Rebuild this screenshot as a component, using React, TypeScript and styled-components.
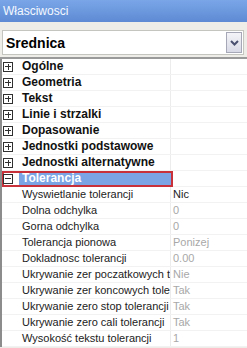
import React from 'react';
import styled, { createGlobalStyle } from 'styled-components';

const GlobalStyle = createGlobalStyle`
  html, body {
    margin: 0;
    padding: 0;
    background: #eeede8;
  }
  * {
    box-sizing: border-box;
  }
`;

const Panel = styled.div`
  width: 247px;
  height: 348px;
  overflow: hidden;
  background: #eeede8;
  font-family: 'Liberation Sans', Arial, sans-serif;
`;

const TitleBar = styled.div`
  height: 22px;
  padding: 4px 0 0 3px;
  background: linear-gradient(#7aa6e8, #5d8ad3);
  color: #f4f8ff;
  font-size: 12px;
`;

const ComboArea = styled.div`
  padding: 8px 3px 2px 2px;
  border-bottom: 2px solid #9a9a9a;
`;

const Combo = styled.div`
  height: 25px;
  display: flex;
  align-items: center;
  justify-content: space-between;
  padding: 0 1px 0 3px;
  background: #fff;
  border: 1px solid #c5c5c0;
  font-weight: bold;
  font-size: 14px;
  color: #000;
`;

const DropButton = styled.div`
  width: 16px;
  height: 21px;
  display: flex;
  align-items: center;
  justify-content: center;
  border: 1px solid #a6a8b8;
  background: linear-gradient(#f4f4f8, #d8dae6);
`;

const Grid = styled.div`
  border-left: 2px solid #8c8c8c;
  background: #fff;
`;

const Row = styled.div`
  display: grid;
  grid-template-columns: 17px 152px 1fr;
  height: 16px;
  border-bottom: 1px solid #f2f2f2;
  font-size: 11px;
  line-height: 15px;
`;

const Gutter = styled.div`
  display: flex;
  align-items: center;
  padding-left: 1px;
`;

const Box = styled.div<{ $open?: boolean }>`
  width: 10px;
  height: 10px;
  border: 1px solid #303030;
  position: relative;
  &::before {
    content: '';
    position: absolute;
    left: 1px;
    right: 1px;
    top: 3.5px;
    height: 1px;
    background: #303030;
  }
  &::after {
    content: '';
    position: absolute;
    top: 1px;
    bottom: 1px;
    left: 3.5px;
    width: 1px;
    background: #303030;
    display: ${({ $open }) => ($open ? 'none' : 'block')};
  }
`;

const CatLabel = styled.div<{ $selected?: boolean }>`
  padding-left: 3px;
  font-weight: bold;
  font-size: 12px;
  color: ${({ $selected }) => ($selected ? '#fff' : '#111')};
  background: ${({ $selected }) => ($selected ? '#7aa4e4' : 'transparent')};
  border-right: 1px solid #ececec;
  white-space: nowrap;
`;

const SelectedRow = styled(Row)`
  outline: 2px solid #c8303a;
  outline-offset: -2px;
  width: 171px;
  grid-template-columns: 17px 154px;
`;

const SelectedWrap = styled.div`
  display: flex;
  background: #fff;
`;

const PropLabel = styled.div`
  padding-left: 3px;
  color: #222;
  white-space: nowrap;
  overflow: hidden;
  border-right: 1px solid #ececec;
`;

const PropValue = styled.div<{ $dim?: boolean }>`
  padding-left: 2px;
  color: ${({ $dim }) => ($dim ? '#a8a8a8' : '#222')};
  white-space: nowrap;
`;

const Filler = styled.div`
  flex: 1;
  border-bottom: 1px solid #f2f2f2;
`;

const categories = [
  'Ogólne',
  'Geometria',
  'Tekst',
  'Linie i strzalki',
  'Dopasowanie',
  'Jednostki podstawowe',
  'Jednostki alternatywne',
];

const props: [string, string, boolean][] = [
  ['Wyswietlanie tolerancji', 'Nic', false],
  ['Dolna odchylka', '0', true],
  ['Gorna odchylka', '0', true],
  ['Tolerancja pionowa', 'Ponizej', true],
  ['Dokladnosc tolerancji', '0.00', true],
  ['Ukrywanie zer poczatkowych tolerancji', 'Nie', true],
  ['Ukrywanie zer koncowych tolerancji', 'Tak', true],
  ['Ukrywanie zero stop tolerancji', 'Tak', true],
  ['Ukrywanie zero cali tolerancji', 'Tak', true],
  ['Wysokość tekstu tolerancji', '1', true],
];

export default function App() {
  return (
    <Panel>
      <GlobalStyle />
      <TitleBar>Własciwosci</TitleBar>
      <ComboArea>
        <Combo>
          Srednica
          <DropButton>
            <svg width="9" height="6" viewBox="0 0 9 6">
              <path d="M1 1 L4.5 4.5 L8 1" stroke="#4a5070" strokeWidth="2" fill="none" />
            </svg>
          </DropButton>
        </Combo>
      </ComboArea>
      <Grid>
        {categories.map((c) => (
          <Row key={c}>
            <Gutter>
              <Box />
            </Gutter>
            <CatLabel>{c}</CatLabel>
            <div />
          </Row>
        ))}
        <SelectedWrap>
          <SelectedRow>
            <Gutter>
              <Box $open />
            </Gutter>
            <CatLabel $selected>Tolerancja</CatLabel>
          </SelectedRow>
          <Filler />
        </SelectedWrap>
        {props.map(([label, value, dim]) => (
          <Row key={label}>
            <div />
            <PropLabel>{label}</PropLabel>
            <PropValue $dim={dim}>{value}</PropValue>
          </Row>
        ))}
      </Grid>
    </Panel>
  );
}
